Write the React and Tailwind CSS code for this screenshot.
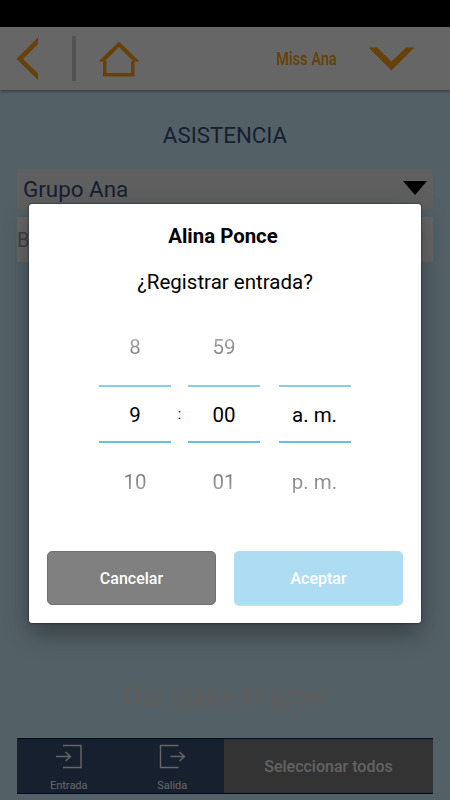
import React from 'react';

const wheels = [
  { prev: '8', current: '9', next: '10' },
  { prev: '59', current: '00', next: '01' },
  { prev: '', current: 'a. m.', next: 'p. m.' },
];

function Header() {
  return (
    <header className="relative flex h-[63px] items-center bg-white text-[#ffa514] shadow-[0_1px_3px_rgba(0,0,0,0.45)]">
      <svg className="ml-4 h-[44px] w-[22px]" viewBox="0 0 22 44" fill="currentColor">
        <path d="M22 0.5V7L7 22L22 36.5V43L0.5 22Z" />
      </svg>
      <div className="ml-[34px] h-[45px] w-1 bg-[#cfcfcf]" />
      <svg className="ml-[22px] h-[36px] w-[42px]" viewBox="0 0 42 36" fill="currentColor">
        <path d="M21 0.5L41.5 20.5H35.5L21 6L6.5 20.5H0.5Z" />
        <path d="M5 20H8.5V32H33V20H36.5V35.5H5Z" />
      </svg>
      <span className="ml-[136px] w-[61px] pb-px">
        <span className="inline-block origin-left scale-x-[0.81] whitespace-nowrap text-[18px] font-semibold">Miss Ana</span>
      </span>
      <svg className="ml-[31px] h-[24px] w-[47px]" viewBox="0 0 47 24" fill="currentColor">
        <path d="M0.5 0.5H9L23.5 14.5L38 0.5H46.5L23.5 23.5Z" />
      </svg>
    </header>
  );
}

function BottomBar() {
  return (
    <div className="mx-[17px] flex h-[56px] border-y border-[#0b1f50]">
      <div className="flex w-[207px] bg-[#375077] text-[11px] leading-[14px] text-white">
        <button className="flex flex-1 flex-col items-center pt-1">
          <svg className="h-[26px] w-[28px]" viewBox="0 0 28 26" fill="none" stroke="currentColor" strokeWidth="1.4">
            <path d="M8 2.5H26V24.5H8M1 13.5H15M10.5 9L15.5 13.5L10.5 18" />
          </svg>
          <span className="mt-[10px]">Entrada</span>
        </button>
        <button className="flex flex-1 flex-col items-center pt-1">
          <svg className="h-[26px] w-[28px]" viewBox="0 0 28 26" fill="none" stroke="currentColor" strokeWidth="1.4">
            <path d="M20.5 2.5H2.5V24.5H20.5M12.5 13.5H26M21.5 9L26.5 13.5L21.5 18" />
          </svg>
          <span className="mt-[10px]">Salida</span>
        </button>
      </div>
      <button className="flex-1 border-y border-[#707070] bg-[#808080] pt-[2px] text-[16px] font-medium text-[#f5f5f5]">
        Seleccionar todos
      </button>
    </div>
  );
}

function Wheel({ prev, current, next }) {
  return (
    <div className="w-[72px] text-center text-[20.5px] leading-[24px] text-black">
      <div className="h-[50px] bg-gradient-to-b from-[#a5a5a5] from-10% to-[#707070] to-50% bg-clip-text text-transparent">{prev}</div>
      <div className="flex h-[58px] items-center justify-center border-y-2 border-t-[#8acfe9] border-b-[#62c1e5] pt-px">
        {current}
      </div>
      <div className="mt-[27px] bg-gradient-to-b from-[#707070] to-[#a8a8a8] bg-clip-text text-transparent">{next}</div>
    </div>
  );
}

function TimeDialog() {
  return (
    <div className="mt-[204px] flex h-[419px] w-[392px] flex-col rounded-[3px] bg-white shadow-[0_0_2px_#001020,0_10px_24px_rgba(0,0,0,0.35)]">
      <h2 className="mt-[19px] pr-[4px] text-center text-[20.4px] leading-[26px] font-bold">Alina Ponce</h2>
      <p className="mt-[20px] text-center text-[20.5px] leading-[26px]">¿Registrar entrada?</p>
      <div className="mt-[40px] ml-[70px] flex">
        <Wheel {...wheels[0]} />
        <span className="w-[17px] pt-[67px] text-center text-[14px] leading-[24px]">:</span>
        <Wheel {...wheels[1]} />
        <div className="w-[18.5px]" />
        <Wheel {...wheels[2]} />
      </div>
      <div className="mt-auto mb-[18px] flex justify-between px-[18px] text-[16px] font-medium text-white">
        <button className="h-[54px] w-[169px] rounded-[5px] border border-[#707070] bg-[#808080] pt-[2px]">Cancelar</button>
        <button className="h-[54px] w-[169px] rounded-[5px] bg-[#aeddf3] pt-[2px] shadow-[0_1px_1px_rgba(0,0,0,0.15)]">Aceptar</button>
      </div>
    </div>
  );
}

export default function App() {
  return (
    <div className="relative h-[800px] w-[450px] overflow-hidden bg-[#d0f0ff] font-[Roboto,sans-serif]">
      <div className="flex h-full flex-col">
        <div className="h-[27px] shrink-0 bg-black" />
        <Header />
        <h1 className="mt-[31px] text-center text-[22.3px] leading-[28px] text-[#375077]">ASISTENCIA</h1>
        <div className="mx-[17px] mt-[20px] flex h-[40px] items-center justify-between bg-[#eeeeee] pr-[6px] pl-[6px] text-[22.4px] text-[#375077]">
          <span className="pt-[2px]">Grupo Ana</span>
          <svg className="mb-[2px] h-[14px] w-[24px]" viewBox="0 0 24 14">
            <path d="M0 0H24L12 14Z" fill="#000" />
          </svg>
        </div>
        <div className="mx-[17px] mt-[8px] flex h-[45px] items-center bg-white text-[20px] text-[#a0a0a0]">Buscar</div>
        <div className="mt-auto mb-[22px] text-center">
          <span className="inline-block origin-center scale-x-[0.89] text-[29px] leading-[40px] font-bold whitespace-nowrap text-[#e6ebec]">Our place to grow</span>
        </div>
        <BottomBar />
        <div className="h-[6px] shrink-0" />
      </div>
      {/* dimmed backdrop with the dialog on top */}
      <div className="absolute inset-0 flex items-start justify-center bg-black/60">
        <TimeDialog />
      </div>
    </div>
  );
}
